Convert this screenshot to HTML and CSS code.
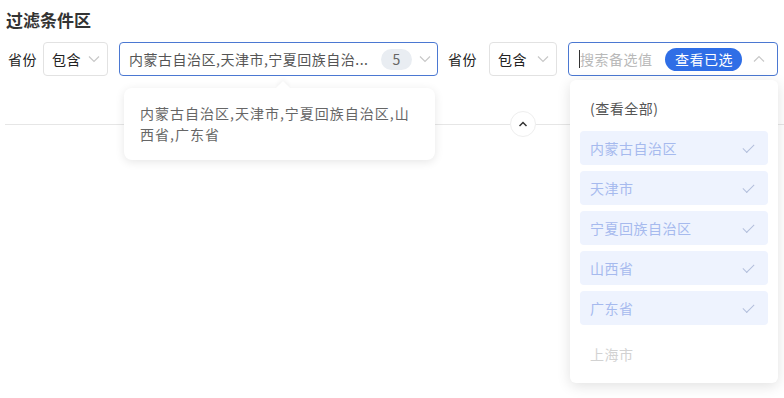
FILE: index.html
```html
<!DOCTYPE html>
<html lang="zh-CN">
<head>
  <meta charset="UTF-8" />
  <title>过滤条件区</title>
  <link rel="stylesheet" href="styles.css">
</head>
<body>
  <div class="page">
    <h2 class="title">过滤条件区</h2>

    <div class="filter-row">
      <span class="field-label">省份</span>
      <div class="select op">
        <span>包含</span>
        <svg class="arrow" width="12" height="8" viewBox="0 0 12 8"><path d="M1 1.5l5 5 5-5" fill="none" stroke="#c8c8c8" stroke-width="1.2"/></svg>
      </div>
      <div class="select multi active">
        <span class="value">内蒙古自治区,天津市,宁夏回族自治...</span>
        <span class="count">5</span>
        <svg class="arrow" width="12" height="8" viewBox="0 0 12 8"><path d="M1 1.5l5 5 5-5" fill="none" stroke="#c8c8c8" stroke-width="1.2"/></svg>
      </div>

      <span class="field-label second">省份</span>
      <div class="select op wide">
        <span>包含</span>
        <svg class="arrow" width="12" height="8" viewBox="0 0 12 8"><path d="M1 1.5l5 5 5-5" fill="none" stroke="#c8c8c8" stroke-width="1.2"/></svg>
      </div>
      <div class="select search active">
        <span class="caret"></span>
        <span class="placeholder">搜索备选值</span>
        <span class="chip">查看已选</span>
        <svg class="arrow" width="12" height="8" viewBox="0 0 12 8"><path d="M1 6.5l5-5 5 5" fill="none" stroke="#c8c8c8" stroke-width="1.2"/></svg>
      </div>
    </div>

    <div class="divider">
      <span class="line left"></span>
      <span class="collapse">
        <svg width="10" height="6" viewBox="0 0 10 6"><path d="M1.5 5l3.5-3.5 3.5 3.5" fill="none" stroke="#333" stroke-width="1.5"/></svg>
      </span>
      <span class="line"></span>
    </div>

    <div class="tooltip">内蒙古自治区,天津市,宁夏回族自治区,山西省,广东省</div>

    <div class="dropdown">
      <div class="opt all">(查看全部)</div>
      <div class="opt checked">内蒙古自治区<span class="tick"></span></div>
      <div class="opt checked">天津市<span class="tick"></span></div>
      <div class="opt checked">宁夏回族自治区<span class="tick"></span></div>
      <div class="opt checked">山西省<span class="tick"></span></div>
      <div class="opt checked">广东省<span class="tick"></span></div>
      <div class="opt disabled">上海市</div>
    </div>
  </div>
</body>
</html>
```

FILE: styles.css
```css
* {
  margin: 0; padding: 0; box-sizing: border-box;
}
body {
  font-family: "Noto Sans CJK SC", "Noto Sans", sans-serif;
  color: #333;
  background: #fff;
  letter-spacing: 0.5px;
}
.page {
  position: relative;
  width: 784px;
  height: 398px;
  overflow: hidden;
  padding: 8px 0 0 6px;
}
.title {
  font-size: 17px;
  font-weight: bold;
  line-height: 24px;
  color: #333;
  letter-spacing: 0;
}
.filter-row {
  display: flex;
  align-items: center;
  margin-top: 10px;
  height: 34px;
}
.field-label {
  flex: 0 0 30px;
  font-size: 14px;
  margin: 0 5px 0 2px;
  color: #222;
  white-space: nowrap;
}
.field-label.second {
  margin: 0 11px 0 0;
}
.select {
  height: 34px;
  display: flex;
  align-items: center;
  border: 1px solid #e2e2e2;
  border-radius: 4px;
  font-size: 14px;
  background: #fff;
  flex-shrink: 0;
}
.select .arrow {
  flex-shrink: 0;
}
.op {
  width: 65px;
  padding: 0 7px 0 8px;
  justify-content: space-between;
  margin-right: 11px;
  color: #222;
}
.op.wide {
  width: 68px;
  margin-right: 11px;
}
.active {
  border-color: #4b78d2;
}
.multi {
  width: 319px;
  padding: 0 6px 0 9px;
  margin-right: 10px;
}
.multi .value {
  flex: 1;
  white-space: nowrap;
  overflow: hidden;
  color: #555;
  min-width: 0;
}
.count {
  width: 31px;
  height: 21px;
  border-radius: 11px;
  background: #e9edf2;
  color: #666;
  text-align: center;
  line-height: 21px;
  margin: 0 7px 0 6px;
  letter-spacing: 0;
}
.search {
  width: 210px;
  padding: 0 12px 0 10px;
}
.caret {
  width: 1px;
  height: 18px;
  background: #333;
}
.placeholder {
  color: #b9b9b9;
  flex: 1;
}
.chip {
  background: #2f6ee6;
  color: #fff;
  border-radius: 12px;
  height: 23px;
  line-height: 23px;
  padding: 0 9px 0 10px;
  margin-right: 11px;
}
.divider {
  display: flex;
  align-items: center;
  margin: 35px 0 0 -1px;
}
.line {
  flex: 1;
  height: 1px;
  background: #e6e6e6;
}
.line.left {
  flex: 0 0 505px;
}
.collapse {
  width: 26px;
  height: 26px;
  border: 1px solid #eee;
  border-radius: 50%;
  display: flex;
  align-items: center;
  justify-content: center;
}
.tooltip {
  position: absolute;
  left: 124px;
  top: 88px;
  width: 311px;
  padding: 15px 20px 15px 16px;
  background: #fff;
  border-radius: 8px;
  box-shadow: 0 2px 10px rgba(0, 0, 0, 0.1);
  font-size: 14px;
  line-height: 21px;
  letter-spacing: 1px;
  color: #666;
}
.tooltip::before {
  content: "";
  position: absolute;
  left: 154px;
  top: -5px;
  width: 10px;
  height: 10px;
  background: #fff;
  transform: rotate(45deg);
  box-shadow: -2px -2px 4px rgba(0, 0, 0, 0.04);
}
.dropdown {
  position: absolute;
  left: 570px;
  top: 80px;
  width: 208px;
  height: 303px;
  padding: 11px 10px;
  background: #fff;
  border-radius: 6px;
  box-shadow: 0 3px 14px rgba(0, 0, 0, 0.12);
  display: flex;
  flex-direction: column;
  gap: 6px;
}
.opt {
  height: 34px;
  display: flex;
  align-items: center;
  justify-content: space-between;
  padding: 0 14px 0 10px;
  font-size: 14px;
  border-radius: 4px;
  color: #555;
}
.opt.checked {
  background: #eef3fe;
  color: #a6baee;
}
.opt.disabled {
  color: #d2d2d2;
  margin-top: 6px;
}
.tick {
  width: 11px;
  height: 6px;
  border-left: 1.3px solid #b3bfdc;
  border-bottom: 1.3px solid #b3bfdc;
  transform: rotate(-45deg);
  margin-top: -3px;
}
```
